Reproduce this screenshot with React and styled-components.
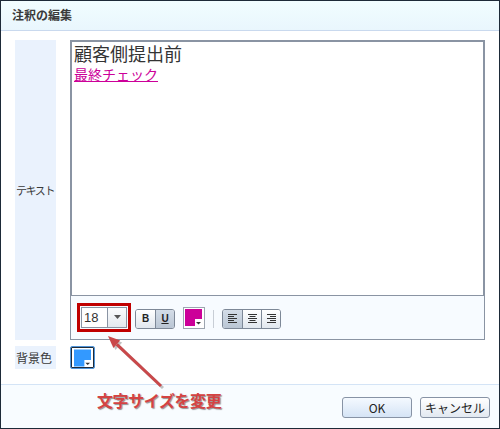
import React from "react";
import styled, { createGlobalStyle } from "styled-components";

const Global = createGlobalStyle`
  html, body { margin: 0; padding: 0; background: #ffffff; }
  * { box-sizing: border-box; }
`;

const JP = `"Noto Sans CJK JP", "Liberation Sans", sans-serif`;

export default function App() {
  return (
    <>
      <Global />
      <Dialog>
        <TitleBar>注釈の編集</TitleBar>
        <Body>
          <Label>テキスト</Label>
          <Editor>
            <TextArea>
              <BigLine>顧客側提出前</BigLine>
              <LinkLine>最終チェック</LinkLine>
            </TextArea>
            <Toolbar>
              <Highlight>
                <SizeSelect>
                  <SizeValue>18</SizeValue>
                  <SelectArrow>
                    <svg width="7" height="4" viewBox="0 0 7 4">
                      <path d="M0 0H7L3.5 4Z" fill="#555" />
                    </svg>
                  </SelectArrow>
                </SizeSelect>
              </Highlight>
              <ToggleGroup>
                <ToggleButton>B</ToggleButton>
                <ToggleButton $pressed $underline>U</ToggleButton>
              </ToggleGroup>
              <ColorButton>
                <Swatch color="#cc0099" size={17} />
              </ColorButton>
              <Divider />
              <ToggleGroup>
                <ToggleButton $pressed>
                  <AlignIcon kind="left" />
                </ToggleButton>
                <ToggleButton>
                  <AlignIcon kind="center" />
                </ToggleButton>
                <ToggleButton>
                  <AlignIcon kind="right" />
                </ToggleButton>
              </ToggleGroup>
            </Toolbar>
          </Editor>
          <Label $short>背景色</Label>
          <div>
            <BgButton>
              <Swatch color="#3399ff" size={18} />
            </BgButton>
          </div>
        </Body>
        <Footer>
          <DialogButton $primary>OK</DialogButton>
          <DialogButton>キャンセル</DialogButton>
        </Footer>
        <Callout width="500" height="429" viewBox="0 0 500 429">
          <g opacity="0.35" transform="translate(2 2)">
            <line x1="161" y1="386" x2="116.8" y2="344.3" stroke="#555" strokeWidth="3" />
            <polygon points="108,336 120.2,340.6 113.4,348" fill="#555" />
          </g>
          <line x1="161" y1="386" x2="116.8" y2="344.3" stroke="#c9484a" strokeWidth="3" />
          <polygon points="108,336 120.2,340.6 113.4,348" fill="#c9484a" />
        </Callout>
        <CalloutText>文字サイズを変更</CalloutText>
      </Dialog>
    </>
  );
}

function Swatch({ color, size }) {
  const n = 7;
  return (
    <svg width={size} height={size} viewBox={`0 0 ${size} ${size}`}>
      <path
        d={`M0 0H${size}V${size - n}H${size - n}V${size}H0Z`}
        fill={color}
      />
      <path
        d={`M${size - 6} ${size - 4}H${size - 1}L${size - 3.5} ${size - 1.5}Z`}
        fill="#333"
      />
    </svg>
  );
}

function AlignIcon({ kind }) {
  const widths = [9, 6, 9, 6, 9];
  return (
    <svg width="9" height="9" viewBox="0 0 9 9">
      {widths.map((w, i) => {
        const x = kind === "left" ? 0 : kind === "right" ? 9 - w : (9 - w) / 2;
        return <rect key={i} x={x} y={i * 2} width={w} height="1" fill="#333" />;
      })}
    </svg>
  );
}

const Dialog = styled.div`
  position: relative;
  width: 500px;
  height: 429px;
  border: 1px solid #1d2a38;
  display: flex;
  flex-direction: column;
  background: #ffffff;
  font-family: ${JP};
  overflow: hidden;
`;

const TitleBar = styled.div`
  height: 30px;
  flex: none;
  display: flex;
  align-items: center;
  padding: 0 0 1px 11px;
  background: linear-gradient(#f1fdff, #e9f6fd);
  border-bottom: 1px solid #c9d9ee;
  font-size: 12px;
  font-weight: bold;
  color: #3a3a3a;
  line-height: 1;
`;

const Body = styled.div`
  flex: 1;
  display: grid;
  grid-template-columns: 41px 1fr;
  grid-template-rows: 300px 23px;
  column-gap: 14px;
  row-gap: 6px;
  padding: 9px 14px 0 14px;
  align-content: start;
`;

const Label = styled.div`
  background: #eaf2fd;
  display: flex;
  align-items: center;
  padding-left: 1px;
  font-size: ${(p) => (p.$short ? "12px" : "11px")};
  letter-spacing: ${(p) => (p.$short ? "0" : "-1.4px")};
  color: #3a3a3a;
  white-space: nowrap;
  line-height: 1;
`;

const Editor = styled.div`
  border: 1px solid #8a94a3;
  display: flex;
  flex-direction: column;
`;

const TextArea = styled.div`
  height: 255px;
  border: 1px solid #8a94a3;
  background: #ffffff;
  padding: 0 2px;
`;

const BigLine = styled.div`
  font-size: 18px;
  line-height: 23px;
  color: #333333;
`;

const LinkLine = styled.div`
  font-size: 14px;
  line-height: 16px;
  margin-top: 1px;
  color: #cc0099;
  text-decoration: underline;
  text-underline-offset: 1px;
`;

const Toolbar = styled.div`
  flex: 1;
  background: #f7fbff;
  display: flex;
  align-items: center;
  padding-left: 6px;
  gap: 8px;
`;

const Highlight = styled.div`
  border: 3px solid #c00000;
  padding: 1px;
  margin-top: -1px;
  margin-right: -4px;
`;

const SizeSelect = styled.div`
  width: 46px;
  height: 21px;
  border: 1px solid #8a94a3;
  display: flex;
  background: #ffffff;
`;

const SizeValue = styled.div`
  flex: 1;
  font-family: "Liberation Sans", sans-serif;
  font-size: 13px;
  color: #333;
  display: flex;
  align-items: center;
  padding-left: 2px;
`;

const SelectArrow = styled.div`
  width: 19px;
  border-left: 1px solid #8a94a3;
  background: linear-gradient(#fbfcfd, #e3e8ee);
  display: flex;
  align-items: center;
  justify-content: center;
`;

const ToggleGroup = styled.div`
  display: flex;
  border: 1px solid #7d8897;
  border-radius: 3px;
  overflow: hidden;
  margin-top: 2px;
`;

const ToggleButton = styled.div`
  width: 19px;
  height: 18px;
  display: flex;
  align-items: center;
  justify-content: center;
  background: ${(p) =>
    p.$pressed
      ? "linear-gradient(#d3dce7, #bac6d4)"
      : "linear-gradient(#ffffff, #e1e7ee)"};
  font-family: "Liberation Sans", sans-serif;
  font-size: 10px;
  font-weight: bold;
  color: #222;
  text-decoration: ${(p) => (p.$underline ? "underline" : "none")};
  & + & {
    border-left: 1px solid #7d8897;
  }
`;

const ColorButton = styled.div`
  width: 22px;
  height: 22px;
  border: 1px solid #9ca5b0;
  background: #ffffff;
  padding: 1px;
  display: flex;
  margin-top: 1px;
`;

const Divider = styled.div`
  width: 1px;
  height: 18px;
  background: #c8ced6;
  margin-top: 2px;
`;

const BgButton = styled.div`
  width: 25px;
  height: 23px;
  border: 1px solid #4f94d8;
  border-radius: 2px;
  box-shadow: inset 0 0 0 1px #1f2b3a;
  background: #ffffff;
  padding: 2px 3px;
  display: flex;
`;

const Footer = styled.div`
  height: 44px;
  flex: none;
  border-top: 1px solid #d4e4f6;
  background: #f8fcff;
  display: flex;
  justify-content: flex-end;
  align-items: flex-start;
  gap: 8px;
  padding: 12px 9px 0 0;
`;

const DialogButton = styled.div`
  width: 70px;
  height: 21px;
  border: 1px solid #8793a5;
  border-radius: 3px;
  background: ${(p) =>
    p.$primary
      ? "linear-gradient(#f4f9ff, #d5e4f5)"
      : "linear-gradient(#ffffff, #e2e9f1)"};
  display: flex;
  align-items: center;
  justify-content: center;
  font-size: 12px;
  color: #222;
  line-height: 1;
`;

const Callout = styled.svg`
  position: absolute;
  left: -1px;
  top: -1px;
  pointer-events: none;
`;

const CalloutText = styled.div`
  position: absolute;
  left: 96px;
  top: 389px;
  font-size: 16px;
  line-height: 20px;
  font-weight: bold;
  letter-spacing: -0.4px;
  color: #d44343;
  text-shadow: 1px 1px 1px rgba(60, 60, 60, 0.55);
  white-space: nowrap;
`;
